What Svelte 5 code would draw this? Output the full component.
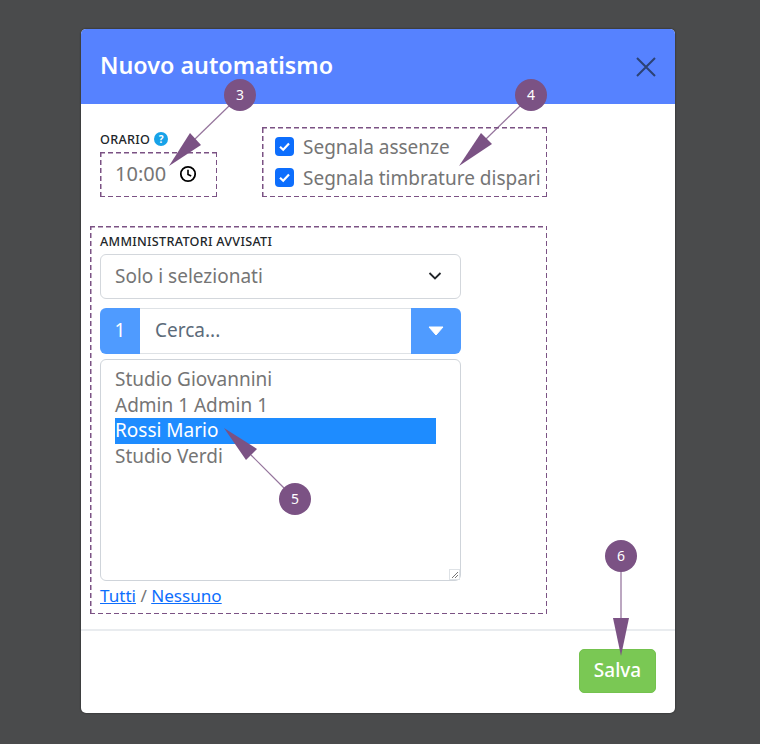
<script>
  let admins = ["Studio Giovannini", "Admin 1 Admin 1", "Rossi Mario", "Studio Verdi"];
  let selected = "Rossi Mario";
  let checks = ["Segnala assenze", "Segnala timbrature dispari"];
</script>

<div class="page">
  <div class="modal">
    <header class="head">
      <h1>Nuovo automatismo</h1>
      <svg class="close" width="22" height="22" viewBox="0 0 22 22">
        <path d="M2 2 L20 20 M20 2 L2 20" stroke="#2c4274" stroke-width="2" fill="none" />
      </svg>
    </header>

    <div class="body">
      <div class="top-row">
        <div class="time-col">
          <div class="label time-label">
            ORARIO
            <span class="help">?</span>
          </div>
          <div class="dash time-box">
            <span>10:00</span>
            <svg width="18" height="18" viewBox="0 0 18 18">
              <circle cx="9" cy="9" r="7.2" stroke="#000" stroke-width="1.8" fill="none" />
              <path d="M9 4.8 V9.4 L12.2 11" stroke="#000" stroke-width="1.6" fill="none" />
            </svg>
          </div>
        </div>
        <div class="dash checks">
          {#each checks as text}
            <div class="check">
              <span class="box">
                <svg width="13" height="13" viewBox="0 0 13 13">
                  <path d="M2 6.8 L5.2 9.8 L11 3.6" stroke="#fff" stroke-width="2.2" fill="none" />
                </svg>
              </span>
              {text}
            </div>
          {/each}
        </div>
      </div>

      <div class="dash admins">
        <div class="label">AMMINISTRATORI AVVISATI</div>
        <div class="select">
          Solo i selezionati
          <svg width="14" height="10" viewBox="0 0 14 10">
            <path d="M1.5 2 L7 7.5 L12.5 2" stroke="#212529" stroke-width="1.8" fill="none" />
          </svg>
        </div>
        <div class="combo">
          <span class="count">1</span>
          <span class="search">Cerca...</span>
          <span class="toggle">
            <svg width="16" height="10" viewBox="0 0 16 10">
              <path d="M1 1 H15 L8 9 Z" fill="#fff" stroke="#fff" stroke-linejoin="round" />
            </svg>
          </span>
        </div>
        <div class="list">
          {#each admins as name}
            <div class="option" class:active={name === selected}>{name}</div>
          {/each}
          <svg class="grip" width="11" height="11" viewBox="0 0 11 11">
            <rect x="0.5" y="0.5" width="10" height="10" fill="#fff" stroke="#dee2e6" />
            <path d="M3 9 L9 3 M6 9 L9 6" stroke="#777" stroke-width="1" />
          </svg>
        </div>
        <div class="links"><a href="#tutti">Tutti</a> / <a href="#nessuno">Nessuno</a></div>
      </div>
    </div>

    <footer class="foot">
      <button class="save">Salva</button>
    </footer>
  </div>

  <!-- numbered callouts drawn over the screenshot -->
  <svg class="notes" width="760" height="744" viewBox="0 0 760 744">
    <g stroke="#7b5284" stroke-width="1.2" opacity="0.8">
      <line x1="229" y1="106" x2="195" y2="139" />
      <line x1="520" y1="106" x2="486" y2="139" />
      <line x1="284" y1="488" x2="251" y2="455" />
    </g>
    <line x1="621" y1="570" x2="621" y2="620" stroke="#7b5284" stroke-width="2" opacity="0.5" />
    <g fill="#7b5284">
      <polygon points="169,166 190,133 201,145" />
      <polygon points="459,166 481,133 492,144" />
      <polygon points="224,428 257,449 246,460" />
      <polygon points="621,656 613,618 629,618" />
      <circle cx="240" cy="95" r="16" />
      <circle cx="531" cy="95" r="16" />
      <circle cx="295" cy="499" r="16" />
      <circle cx="621" cy="556" r="16" />
    </g>
    <g class="nums" fill="#fff" text-anchor="middle">
      <text x="240" y="100">3</text>
      <text x="531" y="100">4</text>
      <text x="295" y="504">5</text>
      <text x="621" y="561">6</text>
    </g>
  </svg>
</div>

<style>
  :global(body) {
    margin: 0;
    background: #4a4b4c;
    font-family: "Noto Sans", sans-serif;
  }
  .page {
    position: relative;
    width: 760px;
    height: 744px;
    padding: 29px 0 0 81px;
    box-sizing: border-box;
    overflow: hidden;
  }
  .modal {
    width: 594px;
    height: 684px;
    background: #fff;
    border-radius: 5px;
    overflow: hidden;
    display: flex;
    flex-direction: column;
    box-shadow: 0 0 2px rgba(0, 0, 0, 0.6);
  }
  .head {
    height: 75px;
    flex: none;
    background: #5682ff;
    display: flex;
    align-items: center;
    justify-content: space-between;
    padding: 0 18px 3px 19px;
    box-sizing: border-box;
  }
  h1 {
    margin: 0;
    font-size: 23.3px;
    font-weight: 600;
    color: #fff;
  }
  .close {
    margin-top: 3px;
  }
  .body {
    flex: 1;
    padding: 23px 0 0 9px;
  }
  /* long dashes, the browser's own dashed border is too short at this width */
  .dash {
    background:
      repeating-linear-gradient(90deg, #7b5284 0 5px, transparent 5px 8px) top / 100% 1.5px no-repeat,
      repeating-linear-gradient(90deg, #7b5284 0 5px, transparent 5px 8px) bottom / 100% 1.5px no-repeat,
      repeating-linear-gradient(0deg, #7b5284 0 5px, transparent 5px 8px) left / 1.5px 100% no-repeat,
      repeating-linear-gradient(0deg, #7b5284 0 5px, transparent 5px 8px) right / 1.5px 100% no-repeat;
    box-sizing: border-box;
  }
  .top-row {
    display: flex;
    height: 70px;
    padding-left: 10px;
    gap: 45px;
  }
  .time-col {
    width: 117px;
    display: flex;
    flex-direction: column;
    justify-content: flex-start;
  }
  .label {
    font-size: 12.6px;
    font-weight: 500;
    letter-spacing: 0.3px;
    color: #212529;
    line-height: 16px;
  }
  .time-label {
    display: flex;
    align-items: center;
    gap: 4px;
    margin: 5px 0 4px;
  }
  .help {
    width: 14px;
    height: 14px;
    border-radius: 50%;
    background: #17a2e8;
    color: #fff;
    font-size: 10px;
    font-weight: 700;
    line-height: 14px;
    text-align: center;
    letter-spacing: 0;
    margin-top: -3px;
  }
  .time-box {
    height: 45px;
    display: flex;
    align-items: center;
    gap: 13px;
    padding: 0 0 2px 15px;
    font-size: 20px;
    color: #757575;
  }
  .checks {
    width: 285px;
    padding: 4px 0 0 13px;
  }
  .check {
    display: flex;
    align-items: center;
    gap: 9px;
    height: 31px;
    font-size: 19px;
    color: #757575;
  }
  .box {
    width: 19px;
    height: 19px;
    border-radius: 4px;
    background: #0d6efd;
    display: flex;
    align-items: center;
    justify-content: center;
  }
  .admins {
    width: 457px;
    height: 388px;
    margin-top: 29px;
    padding: 8px 10px 0;
  }
  .admins .label {
    margin-bottom: 4px;
  }
  .select {
    width: 361px;
    height: 45px;
    box-sizing: border-box;
    border: 1px solid #d3d7dc;
    border-radius: 6px;
    display: flex;
    align-items: center;
    justify-content: space-between;
    padding: 0 18px 2px 14px;
    font-size: 19px;
    color: #757575;
  }
  .combo {
    width: 361px;
    height: 46px;
    margin-top: 9px;
    display: flex;
    font-size: 19px;
  }
  .count {
    width: 40px;
    background: #4f9bff;
    color: #fff;
    display: flex;
    align-items: center;
    justify-content: center;
    padding-bottom: 2px;
    box-sizing: border-box;
    border-radius: 6px 0 0 6px;
  }
  .search {
    flex: 1;
    display: flex;
    align-items: center;
    padding: 0 0 2px 15px;
    color: #5c6b7a;
    border-top: 1px solid #dee2e6;
    border-bottom: 1px solid #dee2e6;
  }
  .toggle {
    width: 50px;
    background: #4f9bff;
    display: flex;
    align-items: center;
    justify-content: center;
    border-radius: 0 6px 6px 0;
  }
  .list {
    position: relative;
    width: 361px;
    height: 222px;
    margin-top: 5px;
    box-sizing: border-box;
    border: 1px solid #cfd4da;
    border-radius: 6px;
    padding: 7px 24px 0 14px;
    font-size: 19px;
    line-height: 25.7px;
    color: #757575;
  }
  .option.active {
    background: #1e8cff;
    color: #fff;
  }
  .grip {
    position: absolute;
    right: 0;
    bottom: 0;
  }
  .links {
    margin-top: 4px;
    font-size: 17.1px;
    line-height: 22px;
    color: #757575;
  }
  .links a {
    color: #0d6efd;
  }
  .foot {
    height: 84px;
    margin-top: auto;
    border-top: 2px solid #e9ecef;
    display: flex;
    justify-content: flex-end;
    padding: 18px 19px 0 0;
    box-sizing: border-box;
  }
  .save {
    width: 77px;
    height: 44px;
    border: 1px solid #74c24e;
    border-radius: 5px;
    background: #7ac854;
    color: #fff;
    font-family: inherit;
    font-size: 19px;
    font-weight: 500;
    padding: 0 0 2px;
  }
  .notes {
    position: absolute;
    left: 0;
    top: 0;
    pointer-events: none;
  }
  .nums {
    font-family: "Noto Sans", sans-serif;
    font-size: 14px;
  }
</style>
